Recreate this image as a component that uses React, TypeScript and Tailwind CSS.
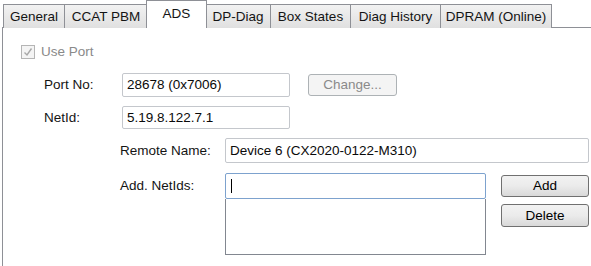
import React from 'react';

const tabs = [
  { label: 'General', w: 'w-[62px]' },
  { label: 'CCAT PBM', w: 'w-[83px]' },
  { label: 'ADS', w: 'w-[61px]', active: true },
  { label: 'DP-Diag', w: 'w-[66px]' },
  { label: 'Box States', w: 'w-[80px]' },
  { label: 'Diag History', w: 'w-[90px]' },
  { label: 'DPRAM (Online)', w: 'w-[111px]' },
];

function Tab({ label, w, active }: { label: string; w: string; active?: boolean }) {
  if (active) {
    return (
      <div
        className={`${w} relative z-10 -mx-[2px] flex h-[28px] items-center justify-center border-x border-t border-[#8e9096] bg-white pb-[2px]`}
      >
        {label}
      </div>
    );
  }
  return (
    <div
      className={`${w} flex h-[24px] items-center justify-center border-l border-t border-r border-[#8e9096] bg-gradient-to-b from-[#f2f2f2] to-[#e0e0e0] [&+&]:border-l-0`}
    >
      {label}
    </div>
  );
}

function TextBox({ value, className, focused }: { value?: string; className: string; focused?: boolean }) {
  return (
    <div
      className={`${className} flex items-center rounded-[2px] border bg-white pl-[4px] text-[#0a0a0a] ${
        focused ? 'border-[#7da2ce]' : 'border-[#c4c7cc]'
      }`}
    >
      {focused ? <span className="ml-[1px] h-[14px] w-px bg-black" /> : value}
    </div>
  );
}

function Button({ label, className, disabled }: { label: string; className: string; disabled?: boolean }) {
  return (
    <div
      className={`${className} flex items-center justify-center rounded-[3px] border ${
        disabled
          ? 'border-[#adb2b5] bg-[#f4f4f4] text-[#8a8a8a]'
          : 'border-[#707070] bg-gradient-to-b from-[#f2f2f2] via-[#ebebeb] to-[#d9d9d9] text-black'
      }`}
    >
      {label}
    </div>
  );
}

export default function App() {
  return (
    <div className="relative h-[266px] w-[591px] overflow-hidden bg-white font-['Liberation_Sans',Arial,sans-serif] text-[13.5px] leading-none text-[#141414]">
      <div className="flex h-[28px] items-end pl-[3px] pt-px">
        {tabs.map((t) => (
          <Tab key={t.label} {...t} />
        ))}
      </div>

      <div className="-mt-px ml-[2px] flex h-[240px] flex-col border-l border-t border-[#8e9096]">
        {/* Use Port */}
        <div className="ml-[18px] mt-[17px] flex h-[14px] items-center gap-[6px] text-[#8a8a8a]">
          <div className="flex h-[14px] w-[14px] items-center justify-center border border-[#b5b5b5] bg-[#f4f4f4]">
            <svg width="10" height="10" viewBox="0 0 10 10" fill="none">
              <path d="M1.5 5.5 L4 8 L8.5 1.5" stroke="#a8a8a8" strokeWidth="1.4" />
            </svg>
          </div>
          <span>Use Port</span>
        </div>

        {/* Port No */}
        <div className="mt-[14px] flex h-[24px] items-center">
          <span className="ml-[41px] w-[78px]">Port No:</span>
          <TextBox value="28678 (0x7006)" className="h-[24px] w-[168px]" />
          <Button label="Change..." disabled className="ml-[18px] h-[22px] w-[89px]" />
        </div>

        {/* NetId */}
        <div className="mt-[9px] flex h-[23px] items-center">
          <span className="ml-[41px] w-[78px]">NetId:</span>
          <TextBox value="5.19.8.122.7.1" className="h-[23px] w-[168px]" />
        </div>

        {/* Remote Name */}
        <div className="mt-[9px] flex h-[25px] items-center">
          <span className="ml-[117px] w-[105px]">Remote Name:</span>
          <TextBox value="Device 6 (CX2020-0122-M310)" className="h-[25px] w-[364px]" />
        </div>

        {/* Add. NetIds */}
        <div className="mt-[10px] flex">
          <span className="ml-[117px] mt-[6px] w-[105px]">Add. NetIds:</span>
          <div className="flex w-[261px] flex-col">
            <TextBox focused className="h-[26px] w-[261px]" />
            <div className="h-[56px] w-[261px] border border-t-0 border-[#828790] bg-white" />
          </div>
          <div className="ml-[15px] mt-[2px] flex flex-col gap-[7px]">
            <Button label="Add" className="h-[22px] w-[88px]" />
            <Button label="Delete" className="h-[23px] w-[88px]" />
          </div>
        </div>
      </div>
    </div>
  );
}
